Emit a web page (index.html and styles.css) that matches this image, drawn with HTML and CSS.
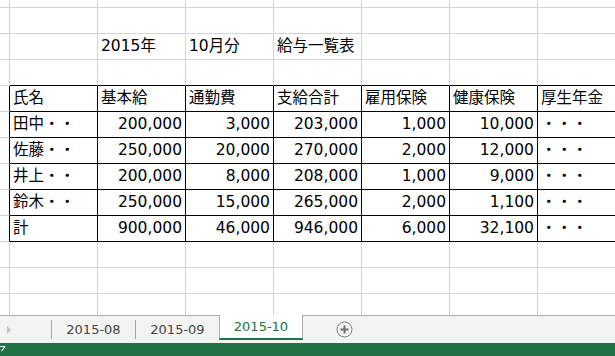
FILE: index.html
```html
<!DOCTYPE html>
<html lang="ja">
<head>
<meta charset="utf-8">
<title>給与一覧表</title>
<link rel="stylesheet" href="styles.css">
</head>
<body>
<div class="app">
  <div class="sheet">
    <div class="c"></div><div class="c"></div><div class="c"></div><div class="c"></div><div class="c"></div><div class="c"></div><div class="c"></div><div class="c"></div>
    <div class="c"></div><div class="c"></div><div class="c"></div><div class="c"></div><div class="c"></div><div class="c"></div><div class="c"></div><div class="c"></div>
    <div class="c"></div><div class="c"></div><div class="c">2015年</div><div class="c">10月分</div><div class="c">給与一覧表</div><div class="c"></div><div class="c"></div><div class="c"></div>
    <div class="c"></div><div class="c tb"></div><div class="c tb"></div><div class="c tb"></div><div class="c tb"></div><div class="c tb"></div><div class="c tb"></div><div class="c tb"></div>

    <div class="c tl"></div><div class="c t">氏名</div><div class="c t">基本給</div><div class="c t">通勤費</div><div class="c t">支給合計</div><div class="c t">雇用保険</div><div class="c t">健康保険</div><div class="c t">厚生年金</div>
    <div class="c tl"></div><div class="c t">田中・・</div><div class="c t n">200,000</div><div class="c t n">3,000</div><div class="c t n">203,000</div><div class="c t n">1,000</div><div class="c t n">10,000</div><div class="c t">・・・</div>
    <div class="c tl"></div><div class="c t">佐藤・・</div><div class="c t n">250,000</div><div class="c t n">20,000</div><div class="c t n">270,000</div><div class="c t n">2,000</div><div class="c t n">12,000</div><div class="c t">・・・</div>
    <div class="c tl"></div><div class="c t">井上・・</div><div class="c t n">200,000</div><div class="c t n">8,000</div><div class="c t n">208,000</div><div class="c t n">1,000</div><div class="c t n">9,000</div><div class="c t">・・・</div>
    <div class="c tl"></div><div class="c t">鈴木・・</div><div class="c t n">250,000</div><div class="c t n">15,000</div><div class="c t n">265,000</div><div class="c t n">2,000</div><div class="c t n">1,100</div><div class="c t">・・・</div>
    <div class="c tl"></div><div class="c t">計</div><div class="c t n">900,000</div><div class="c t n">46,000</div><div class="c t n">946,000</div><div class="c t n">6,000</div><div class="c t n">32,100</div><div class="c t">・・・</div>

    <div class="c"></div><div class="c"></div><div class="c"></div><div class="c"></div><div class="c"></div><div class="c"></div><div class="c"></div><div class="c"></div>
    <div class="c"></div><div class="c"></div><div class="c"></div><div class="c"></div><div class="c"></div><div class="c"></div><div class="c"></div><div class="c"></div>
    <div class="c"></div><div class="c"></div><div class="c"></div><div class="c"></div><div class="c"></div><div class="c"></div><div class="c"></div><div class="c"></div>
  </div>

  <div class="tabbar">
    <div class="nav"><span class="tri"></span></div>
    <div class="tab">2015-08</div>
    <div class="tab">2015-09</div>
    <div class="tab active">2015-10</div>
    <div class="add">
      <svg width="17" height="17" viewBox="0 0 17 17">
        <circle cx="8.5" cy="8.5" r="7.5" fill="none" stroke="#7a7a7a" stroke-width="1"/>
        <path d="M8.5 4.5v8M4.5 8.5h8" stroke="#6e6e6e" stroke-width="2"/>
      </svg>
    </div>
  </div>

  <div class="status">
    <svg class="mark" width="8" height="8" viewBox="0 0 8 8">
      <path d="M0 2.5h5M5 2.5L1.5 7" stroke="#ffffff" stroke-width="1.2" fill="none"/>
    </svg>
  </div>
</div>
</body>
</html>
```

FILE: styles.css
```css
html, body {
  margin: 0;
  padding: 0;
  background: #ffffff;
}

.app {
  width: 615px;
  height: 356px;
  overflow: hidden;
  display: flex;
  flex-direction: column;
}

.sheet {
  height: 315px;
  flex: none;
  overflow: hidden;
  display: grid;
  grid-template-columns: 10px repeat(7, 88px);
  grid-template-rows: 8px repeat(12, 26px);
  font-family: "DejaVu Sans", "Noto Sans CJK JP", sans-serif;
  font-size: 15.5px;
  color: #000000;
}

.c {
  box-sizing: border-box;
  border-right: 1px solid #d4d4d4;
  border-bottom: 1px solid #d4d4d4;
  padding: 0 3px;
  line-height: 24px;
  white-space: nowrap;
  overflow: visible;
}

.tb {
  border-bottom-color: #000000;
}

.tl {
  border-right-color: #000000;
}

.t {
  border-right-color: #000000;
  border-bottom-color: #000000;
}

.n {
  text-align: right;
}

.tabbar {
  flex: none;
  height: 28px;
  box-sizing: border-box;
  border-top: 1px solid #ababab;
  background: #f3f3f3;
  display: flex;
  align-items: flex-start;
  font-family: "DejaVu Sans", sans-serif;
  font-size: 13px;
  color: #444444;
}

.nav {
  width: 51px;
  height: 27px;
  flex: none;
  display: flex;
  align-items: center;
  padding-left: 7px;
  box-sizing: border-box;
}

.tri {
  width: 0;
  height: 0;
  border-top: 4px solid transparent;
  border-bottom: 4px solid transparent;
  border-left: 4px solid #c4c4c4;
}

.tab {
  width: 84px;
  flex: none;
  box-sizing: border-box;
  margin-top: 4px;
  height: 19px;
  line-height: 19px;
  border-left: 1px solid #a6a6a6;
  text-align: center;
}

.tab.active {
  margin-top: -1px;
  height: 25px;
  line-height: 24px;
  background: #ffffff;
  border-left: 1px solid #ababab;
  border-right: 1px solid #ababab;
  border-bottom: 2px solid #217346;
  color: #217346;
}

.add {
  margin-left: 33px;
  height: 27px;
  display: flex;
  align-items: center;
}

.add svg {
  display: block;
}

.status {
  flex: none;
  height: 13px;
  background: #217346;
}

.mark {
  display: block;
  margin-top: 1px;
}
```
